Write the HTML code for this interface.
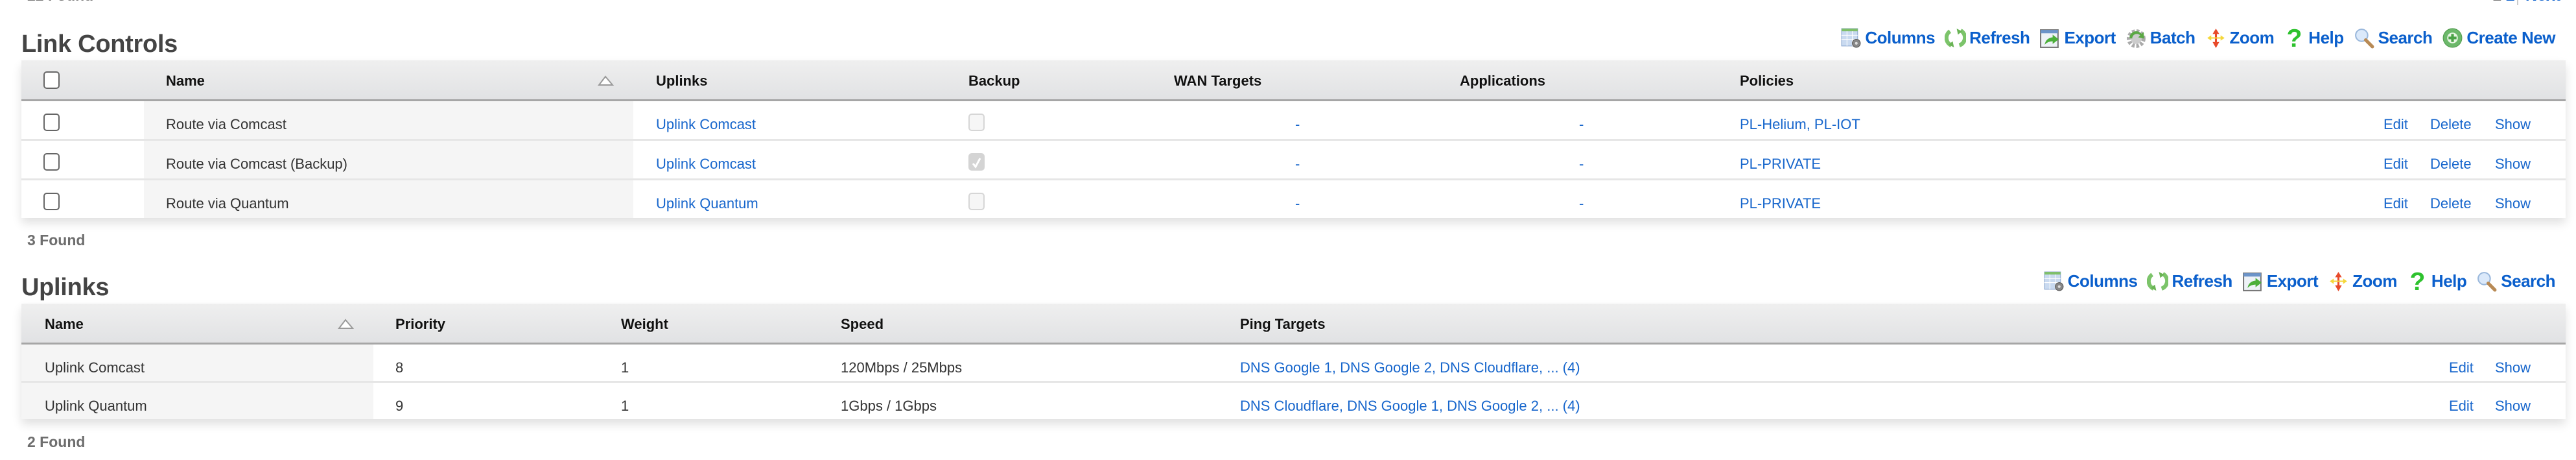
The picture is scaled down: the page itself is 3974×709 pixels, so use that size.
<!DOCTYPE html>
<html><head><meta charset="utf-8"><style>
html,body{margin:0;padding:0;}
body{width:3974px;height:709px;position:relative;overflow:hidden;background:#fff;font-family:"Liberation Sans",Arial,sans-serif;}
.a{position:absolute;white-space:nowrap;}
.t{position:absolute;white-space:nowrap;height:30px;line-height:30px;font-size:22px;color:#333;}
.h{font-weight:bold;color:#111;text-shadow:0 1px 0 #fff;}
.l{color:#1766cc;}
.title{position:absolute;font-size:38px;font-weight:bold;color:#444;line-height:44px;height:44px;letter-spacing:-0.3px;}
.found{position:absolute;font-size:23px;font-weight:bold;color:#6e6e6e;line-height:30px;height:30px;}
.hdr{position:absolute;background:linear-gradient(#efefef,#e1e2e4);border-bottom:3px solid #a6a6a6;}
.row{position:absolute;background:#fff;}
.sep{position:absolute;background:#e6e6e6;height:3px;}
.shade{position:absolute;background:#f5f5f5;}
.shadow{position:absolute;box-shadow:0 8px 14px rgba(0,0,0,0.12);}
.cb{position:absolute;width:21px;height:23px;border:2px solid #666;border-radius:5px;background:#fff;}
.cbd{position:absolute;width:21px;height:23px;border:2px solid #d6d6d6;border-radius:5px;background:#f6f6f6;}
.tb{position:absolute;display:flex;align-items:center;height:36px;}
.tb span{font-size:26px;font-weight:bold;color:#0a5fcc;letter-spacing:-0.5px;margin-left:5px;margin-right:15px;}
.tb svg{width:33px;height:33px;flex:none;}
</style></head><body>

<div class="found" style="left:42px;top:-22px;color:#777;">22 Found</div>
<div class="a" style="left:3845px;top:-22px;font-size:25px;font-weight:bold;line-height:30px;"><span style="color:#777">1</span> <span style="color:#0a5fcc">2</span></div>
<div class="a" style="left:3883px;top:0;width:2px;height:8px;background:#ccc;"></div>
<div class="a" style="left:3896px;top:-22px;font-size:25px;font-weight:bold;line-height:30px;color:#0a5fcc;">Next</div>

<!-- Link Controls -->
<div class="title" style="left:33px;top:46px;">Link Controls</div>

<div class="tb" style="right:32px;top:40px;">
<svg viewBox="0 0 32 32"><rect x="2" y="2" width="24" height="26" fill="#c9daf0" stroke="#8aa6cf"/><rect x="2" y="2" width="24" height="4" fill="#7fbf6a"/><g stroke="#fff"><line x1="2" y1="12" x2="26" y2="12"/><line x1="2" y1="18" x2="26" y2="18"/><line x1="10" y1="6" x2="10" y2="28"/><line x1="18" y1="6" x2="18" y2="28"/></g><circle cx="24" cy="24" r="6" fill="#888" stroke="#555"/><circle cx="24" cy="24" r="2" fill="#ddd"/></svg><span>Columns</span>
<svg viewBox="0 0 32 32"><path d="M8 6 A12 12 0 0 0 10 27" fill="none" stroke="#7cc46a" stroke-width="6"/><path d="M24 5 A12 12 0 0 1 22 27" fill="none" stroke="#7cc46a" stroke-width="6"/><path d="M18 2 L26 6 L20 11Z" fill="#6ab355"/><path d="M14 30 L6 26 L12 21Z" fill="#6ab355"/></svg><span>Refresh</span>
<svg viewBox="0 0 32 32"><rect x="2" y="4" width="26" height="26" fill="#eef2f7" stroke="#777" stroke-width="2"/><rect x="2" y="4" width="26" height="5" fill="#6c94c9"/><path d="M8 26 Q10 16 20 15 L20 11 L29 18 L20 25 L20 21 Q13 21 8 26Z" fill="#4caf3a"/></svg><span>Export</span>
<svg viewBox="0 0 32 32"><circle cx="16" cy="17" r="11" fill="none" stroke="#aaa" stroke-width="6" stroke-dasharray="4 2.5"/><circle cx="16" cy="17" r="8" fill="#ccc"/><path d="M6 16 A10 10 0 0 1 24 10 L27 7 L28 17 L19 15 L22 12 A7 7 0 0 0 10 17Z" fill="#5aa843"/></svg><span>Batch</span>
<svg viewBox="0 0 32 32"><path d="M16 2 L21 10 L17.5 10 L17.5 22 L21 22 L16 31 L11 22 L14.5 22 L14.5 10 L11 10Z" fill="#e84a2a"/><path d="M3 16 L9 12 L9 15 L23 15 L23 12 L29 16 L23 20 L23 17 L9 17 L9 20Z" fill="#f5d73a"/></svg><span>Zoom</span>
<svg viewBox="0 0 32 32"><text x="16" y="29" text-anchor="middle" font-family="Liberation Sans" font-weight="bold" font-size="38" fill="#2ec22e">?</text></svg><span>Help</span>
<svg viewBox="0 0 32 32"><circle cx="12" cy="12" r="9" fill="#dbe9fa" stroke="#9ab8dc" stroke-width="2"/><line x1="18" y1="19" x2="28" y2="29" stroke="#b88a55" stroke-width="5" stroke-linecap="round"/></svg><span>Search</span>
<svg viewBox="0 0 32 32"><circle cx="16" cy="16" r="14" fill="#6cb86a" stroke="#4f9a4c"/><circle cx="16" cy="16" r="8" fill="#e8f5e4"/><rect x="14" y="10" width="4" height="12" fill="#4aa346"/><rect x="10" y="14" width="12" height="4" fill="#4aa346"/></svg><span style="margin-right:0">Create New</span>
</div>

<div class="shadow" style="left:33px;top:93px;width:3925px;height:243px;"></div>
<div class="hdr" style="left:33px;top:93px;width:3925px;height:60px;"></div>
<div class="row" style="left:33px;top:156px;width:3925px;height:180px;"></div>
<div class="shade" style="left:222px;top:156px;width:755px;height:180px;"></div>
<div class="sep" style="left:33px;top:214px;width:3925px;"></div>
<div class="sep" style="left:33px;top:275px;width:3925px;"></div>

<div class="cb" style="left:67px;top:110px;"></div>
<div class="t h" style="left:256px;top:110px;">Name</div>
<svg class="a" style="left:922px;top:116px;" width="26" height="17"><path d="M12 2 L23 15 L2 15Z" fill="#fff" stroke="#9a9a9a" stroke-width="2"/></svg>
<div class="t h" style="left:1012px;top:110px;">Uplinks</div>
<div class="t h" style="left:1494px;top:110px;">Backup</div>
<div class="t h" style="left:1811px;top:110px;">WAN Targets</div>
<div class="t h" style="left:2252px;top:110px;">Applications</div>
<div class="t h" style="left:2684px;top:110px;">Policies</div>

<div class="cb" style="left:67px;top:175px;"></div>
<div class="t" style="left:256px;top:177px;">Route via Comcast</div>
<div class="t l" style="left:1012px;top:177px;">Uplink Comcast</div>
<div class="cbd" style="left:1494px;top:175px;"></div>
<div class="t l" style="left:1998px;top:177px;">-</div>
<div class="t l" style="left:2436px;top:177px;">-</div>
<div class="t l" style="left:2684px;top:177px;">PL-Helium, PL-IOT</div>
<div class="t l" style="left:3677px;top:177px;">Edit</div>
<div class="t l" style="left:3749px;top:177px;">Delete</div>
<div class="t l" style="left:3849px;top:177px;">Show</div>

<div class="cb" style="left:67px;top:236px;"></div>
<div class="t" style="left:256px;top:238px;">Route via Comcast (Backup)</div>
<div class="t l" style="left:1012px;top:238px;">Uplink Comcast</div>
<div class="cbd" style="left:1494px;top:236px;background:#d4d4d4;border-color:#d4d4d4;"></div>
<svg class="a" style="left:1497px;top:241px;" width="20" height="20"><path d="M4 11 L8 16 L15 3" fill="none" stroke="#fff" stroke-width="3"/></svg>
<div class="t l" style="left:1998px;top:238px;">-</div>
<div class="t l" style="left:2436px;top:238px;">-</div>
<div class="t l" style="left:2684px;top:238px;">PL-PRIVATE</div>
<div class="t l" style="left:3677px;top:238px;">Edit</div>
<div class="t l" style="left:3749px;top:238px;">Delete</div>
<div class="t l" style="left:3849px;top:238px;">Show</div>

<div class="cb" style="left:67px;top:297px;"></div>
<div class="t" style="left:256px;top:299px;">Route via Quantum</div>
<div class="t l" style="left:1012px;top:299px;">Uplink Quantum</div>
<div class="cbd" style="left:1494px;top:297px;"></div>
<div class="t l" style="left:1998px;top:299px;">-</div>
<div class="t l" style="left:2436px;top:299px;">-</div>
<div class="t l" style="left:2684px;top:299px;">PL-PRIVATE</div>
<div class="t l" style="left:3677px;top:299px;">Edit</div>
<div class="t l" style="left:3749px;top:299px;">Delete</div>
<div class="t l" style="left:3849px;top:299px;">Show</div>

<div class="found" style="left:42px;top:355px;">3 Found</div>

<!-- Uplinks -->
<div class="title" style="left:33px;top:421px;">Uplinks</div>

<div class="tb" style="right:32px;top:415px;">
<svg viewBox="0 0 32 32"><rect x="2" y="2" width="24" height="26" fill="#c9daf0" stroke="#8aa6cf"/><rect x="2" y="2" width="24" height="4" fill="#7fbf6a"/><g stroke="#fff"><line x1="2" y1="12" x2="26" y2="12"/><line x1="2" y1="18" x2="26" y2="18"/><line x1="10" y1="6" x2="10" y2="28"/><line x1="18" y1="6" x2="18" y2="28"/></g><circle cx="24" cy="24" r="6" fill="#888" stroke="#555"/><circle cx="24" cy="24" r="2" fill="#ddd"/></svg><span>Columns</span>
<svg viewBox="0 0 32 32"><path d="M8 6 A12 12 0 0 0 10 27" fill="none" stroke="#7cc46a" stroke-width="6"/><path d="M24 5 A12 12 0 0 1 22 27" fill="none" stroke="#7cc46a" stroke-width="6"/><path d="M18 2 L26 6 L20 11Z" fill="#6ab355"/><path d="M14 30 L6 26 L12 21Z" fill="#6ab355"/></svg><span>Refresh</span>
<svg viewBox="0 0 32 32"><rect x="2" y="4" width="26" height="26" fill="#eef2f7" stroke="#777" stroke-width="2"/><rect x="2" y="4" width="26" height="5" fill="#6c94c9"/><path d="M8 26 Q10 16 20 15 L20 11 L29 18 L20 25 L20 21 Q13 21 8 26Z" fill="#4caf3a"/></svg><span>Export</span>
<svg viewBox="0 0 32 32"><path d="M16 2 L21 10 L17.5 10 L17.5 22 L21 22 L16 31 L11 22 L14.5 22 L14.5 10 L11 10Z" fill="#e84a2a"/><path d="M3 16 L9 12 L9 15 L23 15 L23 12 L29 16 L23 20 L23 17 L9 17 L9 20Z" fill="#f5d73a"/></svg><span>Zoom</span>
<svg viewBox="0 0 32 32"><text x="16" y="29" text-anchor="middle" font-family="Liberation Sans" font-weight="bold" font-size="38" fill="#2ec22e">?</text></svg><span>Help</span>
<svg viewBox="0 0 32 32"><circle cx="12" cy="12" r="9" fill="#dbe9fa" stroke="#9ab8dc" stroke-width="2"/><line x1="18" y1="19" x2="28" y2="29" stroke="#b88a55" stroke-width="5" stroke-linecap="round"/></svg><span style="margin-right:0">Search</span>
</div>

<div class="shadow" style="left:33px;top:468px;width:3925px;height:178px;"></div>
<div class="hdr" style="left:33px;top:468px;width:3925px;height:60px;"></div>
<div class="row" style="left:33px;top:531px;width:3925px;height:115px;"></div>
<div class="shade" style="left:33px;top:531px;width:543px;height:115px;"></div>
<div class="sep" style="left:33px;top:587px;width:3925px;"></div>

<div class="t h" style="left:69px;top:485px;">Name</div>
<svg class="a" style="left:521px;top:491px;" width="26" height="17"><path d="M12 2 L23 15 L2 15Z" fill="#fff" stroke="#9a9a9a" stroke-width="2"/></svg>
<div class="t h" style="left:610px;top:485px;">Priority</div>
<div class="t h" style="left:958px;top:485px;">Weight</div>
<div class="t h" style="left:1297px;top:485px;">Speed</div>
<div class="t h" style="left:1913px;top:485px;">Ping Targets</div>

<div class="t" style="left:69px;top:552px;">Uplink Comcast</div>
<div class="t" style="left:610px;top:552px;">8</div>
<div class="t" style="left:958px;top:552px;">1</div>
<div class="t" style="left:1297px;top:552px;">120Mbps / 25Mbps</div>
<div class="t l" style="left:1913px;top:552px;">DNS Google 1, DNS Google 2, DNS Cloudflare, ... (4)</div>
<div class="t l" style="left:3778px;top:552px;">Edit</div>
<div class="t l" style="left:3849px;top:552px;">Show</div>

<div class="t" style="left:69px;top:611px;">Uplink Quantum</div>
<div class="t" style="left:610px;top:611px;">9</div>
<div class="t" style="left:958px;top:611px;">1</div>
<div class="t" style="left:1297px;top:611px;">1Gbps / 1Gbps</div>
<div class="t l" style="left:1913px;top:611px;">DNS Cloudflare, DNS Google 1, DNS Google 2, ... (4)</div>
<div class="t l" style="left:3778px;top:611px;">Edit</div>
<div class="t l" style="left:3849px;top:611px;">Show</div>

<div class="found" style="left:42px;top:666px;">2 Found</div>
</body></html>
